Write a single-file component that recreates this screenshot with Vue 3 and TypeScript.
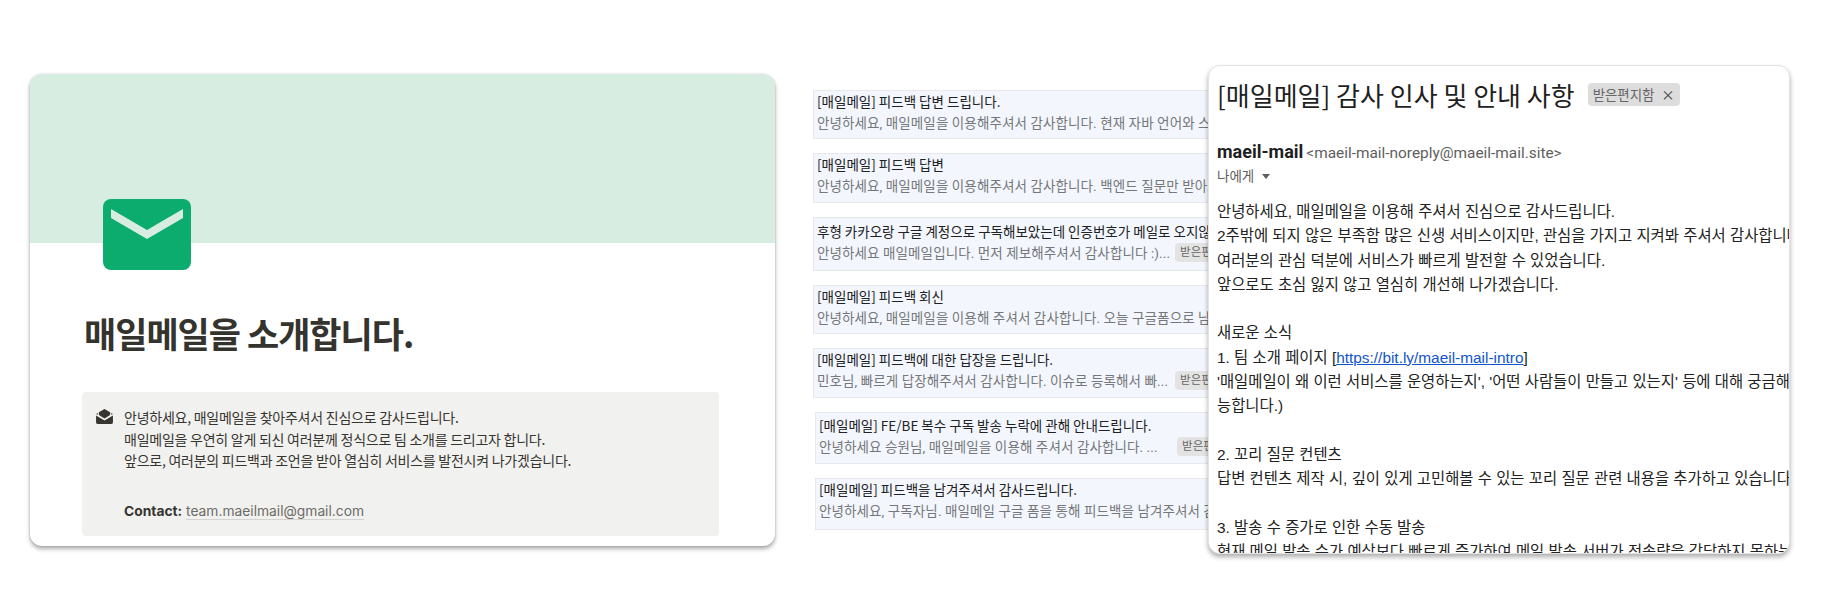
<template>
  <div class="page">
    <section class="intro-card">
      <div class="banner"></div>
      <div class="intro-body">
        <svg class="logo" viewBox="0 0 88 71" aria-hidden="true">
          <rect width="88" height="71" rx="8" fill="#0cab6e" />
          <path d="M8 10 44 31 80 10V19L44 40 8 19Z" fill="#d7ede1" />
        </svg>
        <h1>매일메일을 소개합니다.</h1>
        <div class="callout">
          <svg class="callout-icon" viewBox="0 0 18 16" aria-hidden="true">
            <path d="M9 0 15 3.4V6.4L9 10 3 6.4V3.4Z" fill="#37352f" />
            <path d="M0 6.8 9 12.2 18 6.8V14a2 2 0 0 1-2 2H2a2 2 0 0 1-2-2Z" fill="#37352f" />
            <path d="M1.8 4.2 0 5.2 1.8 6.2ZM16.2 4.2 18 5.2 16.2 6.2Z" fill="#37352f" />
          </svg>
          <div class="callout-text">
            <p>안녕하세요, 매일메일을 찾아주셔서 진심으로 감사드립니다.</p>
            <p>매일메일을 우연히 알게 되신 여러분께 정식으로 팀 소개를 드리고자 합니다.</p>
            <p>앞으로, 여러분의 피드백과 조언을 받아 열심히 서비스를 발전시켜 나가겠습니다.</p>
            <p class="contact"><strong>Contact:</strong> <span>team.maeilmail@gmail.com</span></p>
          </div>
        </div>
      </div>
    </section>

    <section class="mail-area">
      <ul class="mail-list">
        <li
          v-for="row in rows"
          :key="row.subject"
          class="mail-row"
          :class="{ tagged: row.tagged }"
          :style="{ height: row.height + 'px', marginLeft: row.shift + 'px', paddingTop: row.pad + 'px' }"
        >
          <div class="subject">{{ row.subject }}</div>
          <div class="preview">
            <span class="preview-text">{{ row.preview }}</span>
            <span v-if="row.tagged" class="row-chip">받은편지함</span>
          </div>
        </li>
      </ul>

      <article class="mail-panel">
        <header class="mail-head">
          <h2>[매일메일] 감사 인사 및 안내 사항</h2>
          <span class="chip">받은편지함 <b>×</b></span>
        </header>
        <div class="sender">
          <strong>maeil-mail</strong>
          <span>&lt;maeil-mail-noreply@maeil-mail.site&gt;</span>
        </div>
        <div class="to-me">나에게 <i class="caret"></i></div>
        <div class="mail-body">
          <p>안녕하세요, 매일메일을 이용해 주셔서 진심으로 감사드립니다.</p>
          <p>2주밖에 되지 않은 부족함 많은 신생 서비스이지만, 관심을 가지고 지켜봐 주셔서 감사합니다.</p>
          <p>여러분의 관심 덕분에 서비스가 빠르게 발전할 수 있었습니다.</p>
          <p>앞으로도 초심 잃지 않고 열심히 개선해 나가겠습니다.</p>
          <p class="blank"></p>
          <p>새로운 소식</p>
          <p>1. 팀 소개 페이지 [<a href="#">https://bit.ly/maeil-mail-intro</a>]</p>
          <p>'매일메일이 왜 이런 서비스를 운영하는지', '어떤 사람들이 만들고 있는지' 등에 대해 궁금해하신다면</p>
          <p>능합니다.)</p>
          <p class="blank"></p>
          <p>2. 꼬리 질문 컨텐츠</p>
          <p>답변 컨텐츠 제작 시, 깊이 있게 고민해볼 수 있는 꼬리 질문 관련 내용을 추가하고 있습니다.</p>
          <p class="blank"></p>
          <p>3. 발송 수 증가로 인한 수동 발송</p>
          <p>현재 메일 발송 수가 예상보다 빠르게 증가하여 메일 발송 서버가 전송량을 감당하지 못하는</p>
        </div>
      </article>
    </section>
  </div>
</template>

<script setup lang="ts">
interface MailRow {
  subject: string;
  preview: string;
  tagged: boolean;
  height: number;
  shift: number;
  pad: number;
}

const rows: MailRow[] = [
  {
    subject: "[매일메일] 피드백 답변 드립니다.",
    preview: "안녕하세요, 매일메일을 이용해주셔서 감사합니다. 현재 자바 언어와 스프링 질문을 받고 있습니다.",
    tagged: false,
    height: 49,
    shift: 0,
    pad: 0,
  },
  {
    subject: "[매일메일] 피드백 답변",
    preview: "안녕하세요, 매일메일을 이용해주셔서 감사합니다. 백엔드 질문만 받아보실 수 있습니다.",
    tagged: false,
    height: 50,
    shift: 0,
    pad: 0,
  },
  {
    subject: "후형 카카오랑 구글 계정으로 구독해보았는데 인증번호가 메일로 오지않아요",
    preview: "안녕하세요 매일메일입니다. 먼저 제보해주셔서 감사합니다 :)...",
    tagged: true,
    height: 54,
    shift: 0,
    pad: 3,
  },
  {
    subject: "[매일메일] 피드백 회신",
    preview: "안녕하세요, 매일메일을 이용해 주셔서 감사합니다. 오늘 구글폼으로 남겨주신 피드백을 확인했습니다.",
    tagged: false,
    height: 49,
    shift: 0,
    pad: 0,
  },
  {
    subject: "[매일메일] 피드백에 대한 답장을 드립니다.",
    preview: "민호님, 빠르게 답장해주셔서 감사합니다. 이슈로 등록해서 빠...",
    tagged: true,
    height: 50,
    shift: 0,
    pad: 0,
  },
  {
    subject: "[매일메일] FE/BE 복수 구독 발송 누락에 관해 안내드립니다.",
    preview: "안녕하세요 승원님, 매일메일을 이용해 주셔서 감사합니다. ...",
    tagged: true,
    height: 52,
    shift: 2,
    pad: 2,
  },
  {
    subject: "[매일메일] 피드백을 남겨주셔서 감사드립니다.",
    preview: "안녕하세요, 구독자님. 매일메일 구글 폼을 통해 피드백을 남겨주셔서 감사합니다.",
    tagged: false,
    height: 52,
    shift: 2,
    pad: 0,
  },
];
</script>

<style>
html,
body {
  background: #fff;
  overflow: hidden;
}
</style>

<style scoped>
.page {
  width: 1824px;
  height: 614px;
  box-sizing: border-box;
  padding: 74px 0 0 30px;
  display: flex;
  align-items: flex-start;
  font-family: "Noto Sans CJK KR", sans-serif;
  overflow: hidden;
}

/* left card */
.intro-card {
  width: 745px;
  height: 472px;
  flex: none;
  background: #fff;
  border-radius: 12px;
  box-shadow: 0 3px 4px rgba(0, 0, 0, 0.32), 0 0 2px rgba(0, 0, 0, 0.18);
  overflow: hidden;
}
.banner {
  height: 169px;
  background: #d7ede1;
}
.intro-body {
  padding: 0 56px 0 52px;
}
.logo {
  display: block;
  width: 88px;
  height: 71px;
  margin: -44px 0 0 21px;
}
h1 {
  margin: 39px 0 0 2px;
  font-size: 35px;
  line-height: 48px;
  font-weight: 700;
  letter-spacing: -1px;
  color: #35332e;
}
.callout {
  margin-top: 35px;
  height: 144px;
  background: #f1f1ef;
  border-radius: 4px;
  display: flex;
  padding: 15px 0 0 14px;
  box-sizing: border-box;
}
.callout-icon {
  width: 17px;
  height: 15px;
  flex: none;
  margin-top: 2px;
}
.callout-text {
  margin-left: 11px;
  font-size: 14px;
  line-height: 21.5px;
  letter-spacing: -0.25px;
  color: #37352f;
}
.callout-text p {
  margin: 0;
}
.callout-text .contact {
  margin-top: 29px;
  font-family: Inter, "Noto Sans CJK KR", sans-serif;
  font-size: 13.8px;
  letter-spacing: 0;
}
.contact span {
  color: #6d6b66;
  border-bottom: 1px solid #d4d3cf;
}

/* mail list and the opened mail on top of it */
.mail-area {
  position: relative;
  flex: 1;
  height: 480px;
  margin-left: 38px;
}
.mail-list {
  list-style: none;
  margin: 16px 0 0 0;
  padding: 0;
  width: 490px;
  display: flex;
  flex-direction: column;
  gap: 14px;
  overflow: hidden;
}
.mail-row {
  box-sizing: border-box;
  border: 1px solid #e6e8ec;
  background: #f3f6fc;
  padding-left: 3px;
  white-space: nowrap;
  overflow: hidden;
}
.subject {
  font-size: 13.5px;
  line-height: 21px;
  color: #202124;
}
.preview {
  display: flex;
  align-items: center;
  height: 20px;
  font-family: Roboto, "Noto Sans CJK KR", sans-serif;
  font-size: 13.5px;
  letter-spacing: 0.1px;
  color: #74777b;
}
.tagged .preview-text {
  flex: none;
  width: 358px;
}
.row-chip {
  padding: 0 5px;
  height: 19px;
  line-height: 19px;
  font-size: 11.5px;
  border-radius: 4px;
  background: #e3e3e3;
  color: #666;
}
.mail-panel {
  position: absolute;
  left: 395px;
  top: -9px;
  width: 582px;
  height: 489px;
  box-sizing: border-box;
  padding: 0 0 0 8px;
  background: #fff;
  border: 1px solid #e3e3e3;
  border-radius: 12px;
  box-shadow: 0 3px 5px rgba(0, 0, 0, 0.32);
  overflow: hidden;
  white-space: nowrap;
}
.mail-head {
  display: flex;
  align-items: center;
  height: 52px;
  margin-top: 2px;
}
h2 {
  margin: 0;
  font-size: 26px;
  font-weight: 400;
  color: #1f1f1f;
}
.chip {
  margin-left: 13px;
  height: 23px;
  line-height: 23px;
  padding: 0 5px;
  font-size: 13.5px;
  letter-spacing: -0.1px;
  border-radius: 4px;
  background: #dddddd;
  color: #666;
}
.chip b {
  font-weight: 400;
  margin-left: 4px;
  color: #444;
}
.sender {
  margin-top: 21px;
  line-height: 22px;
  font-family: Roboto, "Noto Sans CJK KR", sans-serif;
}
.sender strong {
  font-size: 18px;
  font-weight: 700;
  color: #1f1f1f;
}
.sender span {
  margin-left: 3px;
  font-size: 15.4px;
  color: #5e5e5e;
}
.to-me {
  line-height: 22px;
  font-size: 13.5px;
  color: #5e5e5e;
}
.caret {
  display: inline-block;
  margin: 0 0 2px 5px;
  border: 4.5px solid transparent;
  border-top: 5px solid #5e5e5e;
  border-bottom: 0;
}
.mail-body {
  margin-top: 14px;
  font-family: "Liberation Sans", "Noto Sans CJK KR", sans-serif;
  font-size: 15.4px;
  line-height: 24.3px;
  color: #222;
}
.mail-body p {
  margin: 0;
  height: 24.3px;
}
.mail-body a {
  color: #1155cc;
}
</style>
